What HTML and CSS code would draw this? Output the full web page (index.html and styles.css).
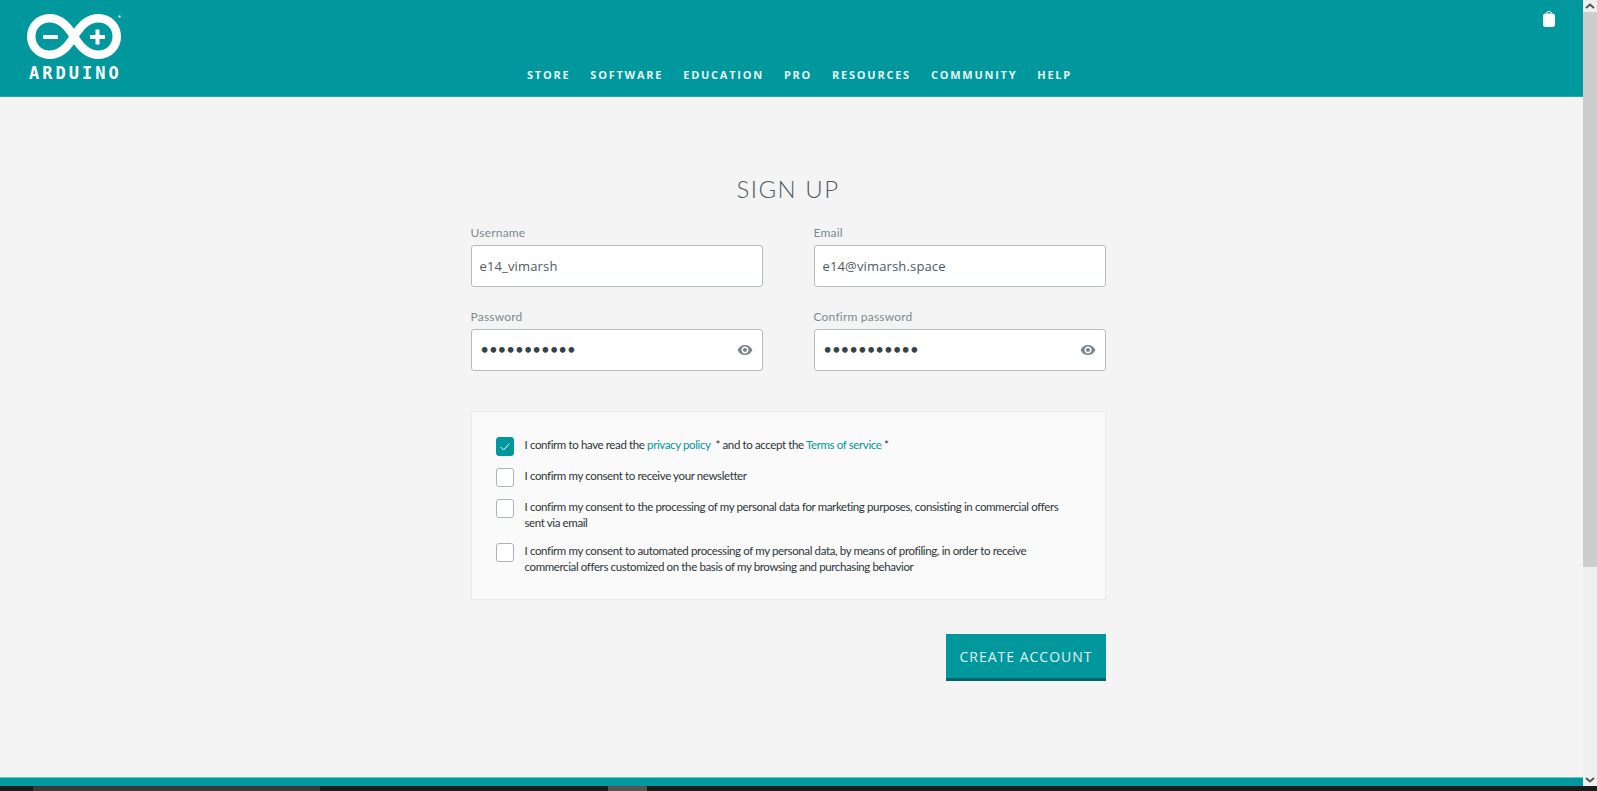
FILE: index.html
```html
<!DOCTYPE html>
<html lang="en">
<head>
    <meta charset="UTF-8">
    <meta name="viewport" content="width=device-width, initial-scale=1.0">
    <title>Arduino - Sign Up</title>
    <link rel="stylesheet" href="styles.css">
</head>
<body>

    <div class="window">
        <div class="page">
            <!-- Top bar -->
            <header class="header">
                <a class="logo" href="#">
                    <svg class="logo-mark" width="98" height="50" viewBox="0 0 98 50">
                        <path d="M47 23.5C40 12 33 5.250 22.500 5.250C12 5.250 4.250 13.500 4.250 23.500C4.250 33.500 12 41.750 22.500 41.750C33 41.750 40 35 47 23.500C54 12 61 5.250 71.500 5.250C82 5.250 89.750 13.500 89.750 23.500C89.750 33.500 82 41.750 71.500 41.750C61 41.750 54 35 47 23.500Z" fill="none" stroke="#fff" stroke-width="8.500"/>
                        <path d="M16 22H31V26H16ZM63 22H68.500V16.500H72.500V22H78V26H72.500V31.500H68.500V26H63Z" fill="#fff"/>
                        <circle cx="92.500" cy="3.500" r="1.300" fill="#fff" opacity="0.7"/>
                    </svg>
                    <span class="logo-text">ARDUINO</span>
                </a>
                <nav class="nav">
                    <a href="#">STORE</a>
                    <a href="#">SOFTWARE</a>
                    <a href="#">EDUCATION</a>
                    <a href="#">PRO</a>
                    <a href="#">RESOURCES</a>
                    <a href="#">COMMUNITY</a>
                    <a href="#">HELP</a>
                </nav>
                <a class="cart" href="#">
                    <svg width="12" height="16" viewBox="0 0 12 16">
                        <path d="M3.500 3V2.500C3.500 1.200 4.500 .5 6 .5C7.500 .5 8.500 1.200 8.500 2.500V3" fill="none" stroke="#fff"/>
                        <rect y="2.500" width="12" height="13.500" rx="2.500" fill="#fff"/>
                    </svg>
                </a>
            </header>

            <!-- Sign up form -->
            <main class="main">
                <form class="signup">
                    <h1>SIGN UP</h1>
                    <div class="fields">
                        <div class="field">
                            <label for="username">Username</label>
                            <input id="username" type="text" value="e14_vimarsh">
                        </div>
                        <div class="field">
                            <label for="email">Email</label>
                            <input id="email" type="text" value="e14@vimarsh.space">
                        </div>
                        <div class="field">
                            <label for="password">Password</label>
                            <div class="password-wrap">
                                <input id="password" class="password" type="password" value="abcdefghijk">
                                <svg class="eye" width="16" height="12" viewBox="0 0 16 12">
                                    <path d="M8 1C4.600 1 1.800 3 .6 6C1.800 9 4.600 11 8 11C11.400 11 14.200 9 15.400 6C14.200 3 11.400 1 8 1ZM8 9.500C6 9.500 4.500 8 4.500 6C4.500 4 6 2.500 8 2.500C10 2.500 11.500 4 11.500 6C11.500 8 10 9.500 8 9.500ZM8 4C6.900 4 6 4.900 6 6C6 7.100 6.900 8 8 8C9.100 8 10 7.100 10 6C10 4.900 9.100 4 8 4Z" fill="#76868a"/>
                                </svg>
                            </div>
                        </div>
                        <div class="field">
                            <label for="confirm">Confirm password</label>
                            <div class="password-wrap">
                                <input id="confirm" class="password" type="password" value="abcdefghijk">
                                <svg class="eye" width="16" height="12" viewBox="0 0 16 12">
                                    <path d="M8 1C4.600 1 1.800 3 .6 6C1.800 9 4.600 11 8 11C11.400 11 14.200 9 15.400 6C14.200 3 11.400 1 8 1ZM8 9.500C6 9.500 4.500 8 4.500 6C4.500 4 6 2.500 8 2.500C10 2.500 11.500 4 11.500 6C11.500 8 10 9.500 8 9.500ZM8 4C6.900 4 6 4.900 6 6C6 7.100 6.900 8 8 8C9.100 8 10 7.100 10 6C10 4.900 9.100 4 8 4Z" fill="#76868a"/>
                                </svg>
                            </div>
                        </div>
                    </div>

                    <div class="consent">
                        <div class="consent-row">
                            <span class="box checked">
                                <svg width="10" height="8" viewBox="0 0 10 8"><path d="M.7 4L3.700 7L9.300 .7" fill="none" stroke="#fff"/></svg>
                            </span>
                            <p>I confirm to have read the <a href="#">privacy policy</a> &nbsp;* and to accept the <a href="#">Terms of service</a> *</p>
                        </div>
                        <div class="consent-row">
                            <span class="box"></span>
                            <p>I confirm my consent to receive your newsletter</p>
                        </div>
                        <div class="consent-row">
                            <span class="box"></span>
                            <p>I confirm my consent to the processing of my personal data for marketing purposes, consisting in commercial offers sent via email</p>
                        </div>
                        <div class="consent-row">
                            <span class="box"></span>
                            <p>I confirm my consent to automated processing of my personal data, by means of profiling, in order to receive commercial offers customized on the basis of my browsing and purchasing behavior</p>
                        </div>
                    </div>

                    <div class="actions">
                        <button type="submit">CREATE ACCOUNT</button>
                    </div>
                </form>
            </main>

            <div class="footer-strip"></div>
        </div>

        <!-- Browser scrollbar -->
        <div class="scrollbar">
            <svg class="arrow" width="10" height="6" viewBox="0 0 10 6"><path d="M1 5L5 1.500L9 5" fill="none" stroke="#555" stroke-width="2"/></svg>
            <div class="thumb"></div>
            <div class="track"></div>
            <svg class="arrow" width="10" height="6" viewBox="0 0 10 6"><path d="M1 1L5 4.500L9 1" fill="none" stroke="#555" stroke-width="2"/></svg>
        </div>
    </div>

    <!-- Sliver of the desktop taskbar -->
    <div class="taskbar">
        <div class="task-start"></div>
        <div class="task-open"></div>
        <div class="task-gap"></div>
        <div class="task-active"></div>
    </div>

</body>
</html>
```

FILE: styles.css
```css
* {
    box-sizing: border-box;
}
html, body {
    height: 100%;
}
body {
    margin: 0;
    display: flex;
    flex-direction: column;
    overflow: hidden;
    font-family: Lato, "Open Sans", sans-serif;
    background-color: #f4f4f4;
    color: #374146;
}
.window {
    display: flex;
    flex: 1;
    min-height: 0;
}
.page {
    flex: 1;
    display: flex;
    flex-direction: column;
    min-width: 0;
}

/* Header */
.header {
    height: 97px;
    display: flex;
    padding-left: 27px;
    background-color: #00979d;
    border-bottom: 1px solid #2aa9ad;
}
.logo {
    width: 94px;
    padding-top: 13px;
    display: flex;
    flex-direction: column;
    text-decoration: none;
}
.logo-mark {
    flex-shrink: 0;
}
.logo-text {
    margin: 1px 0 0 2px;
    font-family: "DejaVu Sans Mono", monospace;
    font-size: 17px;
    font-weight: bold;
    line-height: 18px;
    letter-spacing: 3px;
    white-space: nowrap;
    color: #fff;
}
.nav {
    display: flex;
    gap: 20px;
    align-self: flex-end;
    margin-left: 406px;
    padding-bottom: 14px;
}
.nav a {
    font-family: "Open Sans", sans-serif;
    font-size: 11px;
    font-weight: 700;
    line-height: 15px;
    letter-spacing: 1.750px;
    color: #e6f5f5;
    text-decoration: none;
}
.cart {
    margin-left: auto;
    margin-right: 28px;
    padding-top: 11px;
}

/* Form */
.main {
    flex: 1;
    padding-right: 7px;
}
.signup {
    width: 635px;
    margin: 0 auto;
}
h1 {
    margin: 0;
    padding-top: 76px;
    font-size: 24px;
    font-weight: 300;
    line-height: 32px;
    letter-spacing: 1.500px;
    text-align: center;
    color: #4e5b61;
}
.fields {
    display: grid;
    grid-template-columns: 292px 292px;
    justify-content: space-between;
    row-gap: 23px;
    margin-top: 21px;
}
.field label {
    display: block;
    height: 19px;
    font-size: 12px;
    line-height: 14px;
    letter-spacing: .2px;
    color: #7b8a8e;
}
.field input {
    display: block;
    width: 100%;
    height: 42px;
    padding: 0 8px;
    font-family: "Open Sans", sans-serif;
    font-size: 13px;
    letter-spacing: .15px;
    color: #4e5b61;
    background-color: #fff;
    border: 1px solid #b3bcbe;
    border-radius: 3px;
    outline: none;
}
.password-wrap {
    position: relative;
}
.field input.password {
    font-family: "DejaVu Sans", sans-serif;
    font-size: 16px;
    font-weight: bold;
    letter-spacing: -1.550px;
    color: #374146;
}
.eye {
    position: absolute;
    top: 15px;
    right: 10px;
}
.consent {
    margin-top: 40px;
    padding: 25px 24px 12px;
    background-color: #fafafa;
    border: 1px solid #e6ebea;
}
.consent-row {
    display: flex;
    gap: 11px;
    min-height: 19px;
    margin-bottom: 12px;
}
.consent-row p {
    margin: 0;
    font-size: 11.500px;
    line-height: 16px;
    letter-spacing: -.38px;
    color: #2d3538;
}
.consent-row a {
    color: #00979d;
    text-decoration: none;
}
.box {
    width: 18px;
    height: 19px;
    flex-shrink: 0;
    display: flex;
    align-items: center;
    justify-content: center;
    border: 1px solid #aab4b6;
    border-radius: 3px;
    background-color: #fff;
}
.box.checked {
    background-color: #00979d;
    border-color: #00979d;
}
.actions {
    display: flex;
    justify-content: flex-end;
    margin-top: 34px;
}
button {
    height: 47px;
    padding: 0 13px;
    font-family: "Open Sans", sans-serif;
    font-size: 14px;
    letter-spacing: 1px;
    color: #e0f3f3;
    background-color: #00979d;
    border: none;
    border-bottom: 3px solid #00666a;
    cursor: pointer;
}
.footer-strip {
    height: 9px;
    background-color: #00979d;
    border-top: 1px solid #6cc5c8;
}

/* Scrollbar */
.scrollbar {
    width: 14px;
    display: flex;
    flex-direction: column;
    align-items: center;
    background-color: #f0f0f0;
}
.arrow {
    flex-shrink: 0;
    margin: 3px 0;
}
.thumb {
    width: 100%;
    height: 555px;
    background-color: #cdcdcd;
}
.track {
    flex: 1;
}

/* Taskbar */
.taskbar {
    height: 5px;
    display: flex;
    background-color: #1b1b1d;
}
.task-start {
    width: 33px;
}
.task-open {
    width: 287px;
    background-color: #3a3a3a;
}
.task-gap {
    width: 288px;
}
.task-active {
    width: 39px;
    background-color: #555;
}
```
